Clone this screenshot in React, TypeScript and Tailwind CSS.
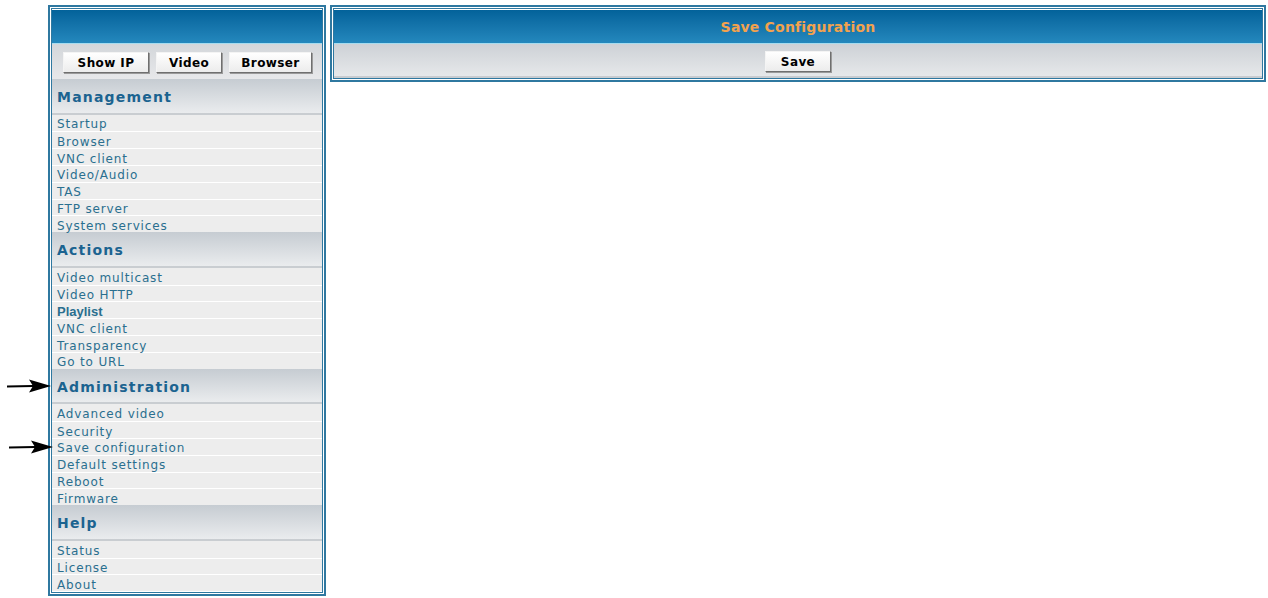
import React from "react";

const verdana = { fontFamily: '"DejaVu Sans", Verdana, sans-serif' };

const sections: { title: string; items: string[] }[] = [
  {
    title: "Management",
    items: ["Startup", "Browser", "VNC client", "Video/Audio", "TAS", "FTP server", "System services"],
  },
  {
    title: "Actions",
    items: ["Video multicast", "Video HTTP", "Playlist", "VNC client", "Transparency", "Go to URL"],
  },
  {
    title: "Administration",
    items: ["Advanced video", "Security", "Save configuration", "Default settings", "Reboot", "Firmware"],
  },
  { title: "Help", items: ["Status", "License", "About"] },
];

function Arrow({ top, left }: { top: number; left: number }) {
  return (
    <svg
      className="absolute"
      style={{ top, left }}
      width="44"
      height="14"
      viewBox="0 0 44 14"
    >
      <line x1="0" y1="7.5" x2="26" y2="7" stroke="#000" strokeWidth="2.2" />
      <polygon points="22,0.5 44,7 22,13.5 26,7" fill="#000" />
    </svg>
  );
}

function Panel({ className, children }: { className?: string; children: React.ReactNode }) {
  return (
    <div className={`border-2 border-[#2f78a0] bg-white p-px ${className ?? ""}`}>
      <div className="border border-[#2f78a0]">{children}</div>
    </div>
  );
}

function BlueBar({ children }: { children?: React.ReactNode }) {
  return (
    <div className="flex h-[34px] items-center justify-center border-b border-[#a6dcef] bg-gradient-to-b from-[#03629a] to-[#2488bd]">
      {children}
    </div>
  );
}

function Btn({ label, w }: { label: string; w: string }) {
  return (
    <div
      className={`${w} flex h-[21px] items-center justify-center border border-t-[#f4f4f4] border-l-[#f4f4f4] border-b-[#6f6f6f] border-r-[#6f6f6f] bg-gradient-to-b from-white to-[#ececec] pt-px text-[12px] font-bold tracking-[0.4px] text-black shadow-[1px_1px_0_#9a9a9a]`}
      style={verdana}
    >
      {label}
    </div>
  );
}

export default function App() {
  return (
    <div className="relative min-h-[598px] w-[1268px] bg-white" style={verdana}>
      <Arrow top={379} left={7} />
      <Arrow top={440} left={9} />

      <div className="flex items-start gap-[4px] pl-[48px] pt-[5px]">
        <Panel className="w-[278px]">
          <div className="pb-px pt-px">
            <BlueBar />
            <div className="flex h-[35px] items-center gap-[7px] bg-gradient-to-b from-[#d3d6da] to-[#e7e8ea] pl-[11px] pt-[2px]">
              <Btn label="Show IP" w="w-[86px]" />
              <Btn label="Video" w="w-[66px]" />
              <Btn label="Browser" w="w-[83px]" />
            </div>
            {sections.map((s) => (
              <div key={s.title}>
                <div className="flex h-[35.5px] items-center border-b-2 border-[#c9cdd1] bg-gradient-to-b from-[#c6ccd2] to-[#eaecee] pl-[5px] pt-[3px]">
                  <span className="text-[14px] font-bold tracking-[1.2px] text-[#1b6390]">{s.title}</span>
                </div>
                {s.items.map((it, i) => (
                  <div
                    key={it + i}
                    className={`flex h-[16.83px] items-center bg-[#ededed] pl-[5px] pt-[3px] text-[12px] leading-none tracking-[0.85px] text-[#2a6f8f] ${i > 0 ? "border-t border-white" : ""}`}
                    style={
                      it === "Playlist"
                        ? { fontFamily: '"Liberation Sans", Arial, sans-serif', fontWeight: 600, fontSize: 13, letterSpacing: 0 }
                        : undefined
                    }
                  >
                    {it}
                  </div>
                ))}
              </div>
            ))}
          </div>
        </Panel>

        <Panel className="mr-[2px] flex-1">
          <div className="pt-px">
            <BlueBar>
              <span className="pt-[2px] text-[14px] font-bold tracking-[0.2px] text-[#f2a24e]">Save Configuration</span>
            </BlueBar>
            <div className="flex h-[34px] items-center justify-center border-b-2 border-[#c8ccd0] bg-gradient-to-b from-[#cdd1d6] to-[#e6e8ea] pt-[2px]">
              <Btn label="Save" w="w-[66px]" />
            </div>
          </div>
        </Panel>
      </div>
    </div>
  );
}
